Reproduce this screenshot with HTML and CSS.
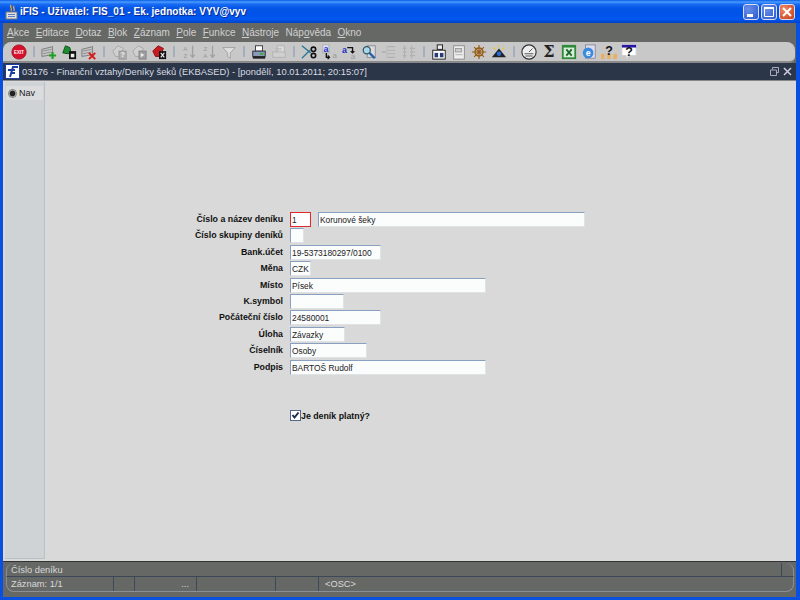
FILE: index.html
```html
<!DOCTYPE html>
<html lang="cs">
<head>
<meta charset="utf-8">
<title>iFIS</title>
<link rel="stylesheet" href="styles.css">
</head>
<body>
<div class="window">
  <header class="titlebar">
    <svg class="app-icon" width="14" height="16" viewBox="0 0 14 16"><rect x="1" y="8" width="11" height="7" fill="#e0e0e0" stroke="#777"/><path d="M3 10.500h7M3 12.500h7" stroke="#5a7fc0"/><path d="M6 1c-2 2 2 3 0 6M9 2c-1.500 2 1 2 0 5" fill="none" stroke="#e8a040" stroke-width="1.400"/></svg>
    <span class="app-title">iFIS - Uživatel: FIS_01 - Ek. jednotka: VYV@vyv</span>
    <div class="win-buttons">
      <span class="win-btn"><svg width="16" height="16" viewBox="0 0 16 16"><rect x="4" y="10" width="6" height="3" fill="#fff"/></svg></span>
      <span class="win-btn"><svg width="16" height="16" viewBox="0 0 16 16"><path d="M3.500 4.500h9v8h-9z" fill="none" stroke="#fff"/><path d="M3 4h10" stroke="#fff" stroke-width="2"/></svg></span>
      <span class="win-btn close"><svg width="16" height="16" viewBox="0 0 16 16"><path d="M4 4l8 8M12 4l-8 8" stroke="#fff" stroke-width="2"/></svg></span>
    </div>
  </header>

  <nav class="menubar">
    <span><u>A</u>kce</span><span><u>E</u>ditace</span><span><u>D</u>otaz</span><span><u>B</u>lok</span><span><u>Z</u>áznam</span><span><u>P</u>ole</span><span><u>F</u>unkce</span><span><u>N</u>ástroje</span><span>Náp<u>o</u>věda</span><span><u>O</u>kno</span>
  </nav>

  <div class="toolbar-wrap">
  <div class="toolbar">
    <span class="tool"><svg viewBox="0 0 18 18"><circle cx="9" cy="9" r="8" fill="#d8102c" stroke="#a01020"/><text x="9" y="11" class="exit-text">EXIT</text></svg></span>
    <i class="sep"></i>
    <span class="tool"><svg viewBox="0 0 18 18"><path d="M1 6l12-3v9L1 14z" fill="#c4c4c4" stroke="#777"/><path d="M2 8l10-2M2 11l10-2" stroke="#8c8c8c"/><path d="M13 9v8M9 13h8" stroke="#20a020" stroke-width="2.400"/></svg></span>
    <span class="tool"><svg viewBox="0 0 18 18"><path d="M2 10l3-8 5 2 1 5-3 2z" fill="#1c8c30" stroke="#0c4c18"/><rect x="9" y="8" width="8" height="9" fill="#111"/><rect x="11" y="11" width="4" height="4" fill="#eee"/></svg></span>
    <span class="tool"><svg viewBox="0 0 18 18"><path d="M1 6l12-3v9L1 14z" fill="#c4c4c4" stroke="#777"/><path d="M2 8l10-2M2 11l10-2" stroke="#8c8c8c"/><path d="M9 10l7 7M16 10l-7 7" stroke="#d81818" stroke-width="2.200"/></svg></span>
    <i class="sep"></i>
    <span class="tool"><svg viewBox="0 0 18 18"><path d="M2 8l6-6 6 3-4 9H5z" fill="#d0d0d0" stroke="#a4a4a4"/><rect x="9" y="8" width="8" height="9" fill="#b0b0b0" stroke="#909090"/><text x="13" y="15" class="mini">?</text></svg></span>
    <span class="tool"><svg viewBox="0 0 18 18"><path d="M2 8l6-6 6 3-4 9H5z" fill="#d0d0d0" stroke="#a4a4a4"/><rect x="9" y="8" width="8" height="9" fill="#a0a0a0" stroke="#808080"/><path d="M11 10l4 2.500-4 2.500z" fill="#eee"/></svg></span>
    <span class="tool"><svg viewBox="0 0 18 18"><path d="M2 8l6-6 6 3-4 9H5z" fill="#c81c20" stroke="#801014"/><rect x="9" y="8" width="8" height="9" fill="#111"/><path d="M11 10l4 5M15 10l-4 5" stroke="#eee" stroke-width="1.300"/></svg></span>
    <i class="sep"></i>
    <span class="tool"><svg viewBox="0 0 18 18"><text x="5" y="8" class="sort">A</text><text x="5" y="16" class="sort">Z</text><path d="M13 2v13M10.500 12l2.500 3 2.500-3" fill="none" stroke="#a0a0a0" stroke-width="1.400"/></svg></span>
    <span class="tool"><svg viewBox="0 0 18 18"><text x="5" y="8" class="sort">Z</text><text x="5" y="16" class="sort">A</text><path d="M13 2v13M10.500 12l2.500 3 2.500-3" fill="none" stroke="#a0a0a0" stroke-width="1.400"/></svg></span>
    <span class="tool"><svg viewBox="0 0 18 18"><path d="M2 4h14l-5.500 6v6l-3-2v-4z" fill="#dedede" stroke="#a0a0a0"/></svg></span>
    <i class="sep"></i>
    <span class="tool"><svg viewBox="0 0 18 18"><rect x="5" y="2" width="8" height="6" fill="#fff" stroke="#333"/><rect x="2" y="8" width="14" height="6" fill="#8a9ab8" stroke="#223"/><rect x="10" y="10" width="4" height="2" fill="#30b030"/><rect x="2" y="14" width="14" height="2.500" fill="#222"/></svg></span>
    <span class="tool"><svg viewBox="0 0 18 18"><rect x="7" y="2" width="8" height="8" fill="#dcdcdc" stroke="#b0b0b0"/><rect x="2" y="9" width="14" height="6" fill="#d0d0d0" stroke="#b0b0b0"/><path d="M5 5h7M5 7h7" stroke="#b8b8b8"/></svg></span>
    <i class="sep"></i>
    <span class="tool"><svg viewBox="0 0 18 18"><path d="M1 2l10 8M1 16l9-9" stroke="#2a7a9a" stroke-width="1.500"/><circle cx="14" cy="6" r="2.500" fill="none" stroke="#111" stroke-width="1.800"/><circle cx="14" cy="13" r="2.500" fill="none" stroke="#111" stroke-width="1.800"/></svg></span>
    <span class="tool"><svg viewBox="0 0 18 18"><rect x="2" y="1" width="7" height="9" fill="#dfe3ff" stroke="#aaa"/><text x="5.500" y="9" class="letter-a">a</text><text x="13" y="16" class="letter-b">a</text><path d="M6 10v5h3M7.500 13l2 2-2 2" fill="none" stroke="#111" stroke-width="1.500"/></svg></span>
    <span class="tool"><svg viewBox="0 0 18 18"><text x="1" y="10" class="letter-a">a</text><text x="11" y="17" class="letter-b">a</text><path d="M7 4h6v6M11 8l2 2 2-2" fill="none" stroke="#111" stroke-width="1.500"/></svg></span>
    <span class="tool"><svg viewBox="0 0 18 18"><rect x="7" y="2" width="9" height="13" fill="#dcdcdc" stroke="#888"/><circle cx="6.500" cy="7" r="4" fill="#a8d8e8" stroke="#356" stroke-width="1.400"/><path d="M9.500 10l6 6" stroke="#2060b0" stroke-width="2.600"/></svg></span>
    <span class="tool"><svg viewBox="0 0 18 18"><path d="M7 3h9M7 7h9M7 11h9M7 15h9" stroke="#b0b0b0" stroke-width="1.300"/><path d="M1 9h5" stroke="#a0a0a0"/><rect x="6" y="2" width="1" height="14" fill="#bbb"/></svg></span>
    <span class="tool"><svg viewBox="0 0 18 18"><path d="M4 2v14M12 2v14M2 5h4M2 9h4M2 13h4M10 5h6M10 9h6M10 13h6" stroke="#b0b0b0" stroke-width="1.300"/></svg></span>
    <i class="sep"></i>
    <span class="tool"><svg viewBox="0 0 18 18"><rect x="2" y="7" width="14" height="10" fill="#fff" stroke="#111"/><rect x="4" y="10" width="4" height="5" fill="#2a3c78"/><rect x="10" y="10" width="4" height="5" fill="#2a3c78"/><rect x="7" y="1" width="6" height="5" fill="#eee" stroke="#111"/></svg></span>
    <span class="tool"><svg viewBox="0 0 18 18"><rect x="3" y="2" width="12" height="15" fill="#eee" stroke="#888"/><rect x="5" y="5" width="7" height="4" fill="#ccc" stroke="#999"/><path d="M5 12h8" stroke="#aaa"/></svg></span>
    <span class="tool"><svg viewBox="0 0 18 18"><circle cx="9" cy="9" r="4.500" fill="none" stroke="#965a12" stroke-width="1.600"/><path d="M9 1v16M1 9h16M3.500 3.500l11 11M14.500 3.500l-11 11" stroke="#965a12" stroke-width="1.300"/></svg></span>
    <span class="tool"><svg viewBox="0 0 18 18"><path d="M1 15L9 5l8 10z" fill="#222"/><path d="M3 4l2 2M9 1v2M15 4l-2 2" stroke="#e8c820" stroke-width="1.400"/><circle cx="9" cy="11" r="2.500" fill="#2a6ae0"/></svg></span>
    <i class="sep"></i>
    <span class="tool"><svg viewBox="0 0 18 18"><circle cx="9" cy="9" r="8" fill="#eee" stroke="#333" stroke-width="1.300"/><path d="M9 9l4-4M4 11h10M5 13.500h8" stroke="#444"/></svg></span>
    <span class="tool"><span class="sigma">Σ</span></span>
    <span class="tool"><svg viewBox="0 0 18 18"><rect x="1" y="1" width="16" height="16" fill="#2e8a3a"/><rect x="3" y="4" width="12" height="11" fill="#d8ecd8"/><path d="M6 6l6 7M12 6l-6 7" stroke="#186828" stroke-width="2"/></svg></span>
    <span class="tool"><svg viewBox="0 0 18 18"><rect x="5" y="1" width="11" height="15" fill="#dde" stroke="#889"/><circle cx="8" cy="10" r="6" fill="#3a8ae0"/><text x="8" y="13" class="ie">e</text></svg></span>
    <span class="tool"><svg viewBox="0 0 18 18"><rect x="0" y="11" width="4" height="6" fill="#e8b060"/><rect x="7" y="11" width="4" height="6" fill="#e8b060"/><rect x="14" y="11" width="4" height="6" fill="#e8b060"/><text x="9" y="12" class="help">?</text></svg></span>
    <span class="tool"><svg viewBox="0 0 18 18"><path d="M1 2h16v11H9l-3 4v-4H1z" fill="#fff" stroke="#ccc"/><rect x="1" y="1" width="16" height="3" fill="#2818a8"/><text x="9" y="14" class="help">?</text></svg></span>
  </div>
  </div>

  <div class="doc-title">
    <svg class="doc-icon" width="15" height="15" viewBox="0 0 15 15"><rect x=".5" y=".5" width="14" height="14" fill="#fff" stroke="#1c3ca0"/><path d="M5 13l3-10h5M3 6h7M6 9h4" fill="none" stroke="#1c3ca0" stroke-width="2"/></svg>
    <span class="doc-text">03176 - Finanční vztahy/Deníky šeků (EKBASED) - [pondělí, 10.01.2011; 20:15:07]</span>
    <svg class="doc-ctl" width="9" height="9" viewBox="0 0 9 9"><path d="M2.500 2.500v-2h6v5h-2M.5 3h6v5.500h-6z" fill="none" stroke="#aab"/></svg>
    <svg class="doc-ctl" width="9" height="9" viewBox="0 0 9 9"><path d="M1 1l7 7M8 1l-7 7" stroke="#ccd" stroke-width="1.500"/></svg>
  </div>

  <main class="doc-body">
    <aside class="nav-pane">
      <div class="nav-item"><span class="radio"></span><span>Nav</span></div>
    </aside>
    <section class="form-area">
      <form class="form-grid">
        <label>Číslo a název deníku</label>
        <div class="pair"><span class="field focus w-21">1</span><span class="field w-267">Korunové šeky</span></div>
        <label>Číslo skupiny deníků</label><div><span class="field w-14"></span></div>
        <label>Bank.účet</label><div><span class="field w-91">19-5373180297/0100</span></div>
        <label>Měna</label><div><span class="field w-21">CZK</span></div>
        <label>Místo</label><div><span class="field w-196">Písek</span></div>
        <label>K.symbol</label><div><span class="field w-54"></span></div>
        <label>Počáteční číslo</label><div><span class="field w-91">24580001</span></div>
        <label>Úloha</label><div><span class="field w-55">Závazky</span></div>
        <label>Číselník</label><div><span class="field w-77">Osoby</span></div>
        <label>Podpis</label><div><span class="field w-196">BARTOŠ Rudolf</span></div>
      </form>
      <div class="check-row">
        <svg class="check" width="11" height="11" viewBox="0 0 11 11"><rect x=".5" y=".5" width="10" height="10" fill="#fff" stroke="#55688c"/><path d="M2.500 5l2 2.500 4-5" fill="none" stroke="#1c2c50" stroke-width="2"/></svg>
        <span>Je deník platný?</span>
      </div>
    </section>
  </main>

  <footer class="status">
    <div class="status-top"><span>Číslo deníku</span><i class="end-cell"></i></div>
    <div class="status-bottom">
      <span class="cell c-rec">Záznam: 1/1</span>
      <span class="cell c-a"></span>
      <span class="cell c-b">...</span>
      <span class="cell c-c"></span>
      <span class="cell c-d"></span>
      <span class="cell c-e">&lt;OSC&gt;</span>
    </div>
  </footer>
</div>
</body>
</html>
```
FILE: styles.css
```css
* { box-sizing: border-box; }
html, body { margin: 0; padding: 0; }
body { width: 800px; height: 600px; overflow: hidden; font-family: "Liberation Sans", Arial, sans-serif; }
.window { width: 800px; height: 600px; display: flex; flex-direction: column; background: #0a50e0; padding: 0 4px 3px 3px; }

.titlebar { height: 23px; margin: 0 -4px 0 -3px; padding: 0 5px; display: flex; align-items: center; color: #fff;
  background: linear-gradient(#0a5ce8 0, #4a9cff 2px, #1a6cf4 4px, #0456e6 8px, #0052e8 14px, #0458f0 19px, #0040c8 23px); }
.app-icon { margin-right: 1px; flex: none; }
.app-title { font: bold 10px "Liberation Sans", sans-serif; letter-spacing: .05px; text-shadow: 1px 1px 0 #0a2a90; }
.win-buttons { margin-left: auto; display: flex; gap: 2px; }
.win-btn { width: 16px; height: 16px; border: 1px solid #dde; border-radius: 3px; background: radial-gradient(circle at 30% 30%, #6a90e8, #2a58d0); display: block; overflow: hidden; }
.win-btn svg { display: block; margin: -1px; }
.win-btn.close { background: radial-gradient(circle at 30% 30%, #ee8a68, #c83c14); }

.menubar { height: 19px; background: #666866; display: flex; align-items: center; padding-left: 4px; gap: 6.400px; color: #d0d0d0; font-size: 10px; }
.menubar u { text-decoration: underline; }

.toolbar-wrap { height: 21px; background: #666866; flex: none; }
.toolbar { height: 100%; margin-right: 1px; background: #c8c8c8; border-radius: 8px 8px 6px 0; border-bottom: 2px solid #8a8a8a; display: flex; align-items: center; padding-left: 6px; }
.tool { width: 20px; height: 19px; display: flex; align-items: center; justify-content: center; flex: none; }
.tool svg { display: block; width: 16px; height: 16px; overflow: hidden; }
.sep { width: 10px; height: 11px; flex: none; background: linear-gradient(#a4aebc, #a4aebc) center / 2px 100% no-repeat; }
.exit-text { font: bold 5px "Liberation Sans", sans-serif; fill: #fff; text-anchor: middle; }
.mini { font: bold 8px "Liberation Sans", sans-serif; fill: #eee; text-anchor: middle; }
.sort { font: 7px "Liberation Sans", sans-serif; fill: #999; text-anchor: middle; }
.letter-a { font: bold 10px "Liberation Sans", sans-serif; fill: #2030c0; text-anchor: middle; }
.letter-a:first-child { text-anchor: start; }
.letter-b { font: 9px "Liberation Sans", sans-serif; fill: #999; }
.ie { font: bold 10px "Liberation Sans", sans-serif; fill: #fff; text-anchor: middle; }
.help { font: bold 14px "Liberation Sans", sans-serif; fill: #111; text-anchor: middle; }
.sigma { font: bold 16px "DejaVu Serif", serif; color: #222; line-height: 18px; }

.doc-title { height: 18px; background: #2b3648; border-bottom: 1px solid #888; display: flex; align-items: center; padding: 0 4px 0 2px; color: #d8dce0; font-size: 9.400px; gap: 2px; }
.doc-icon { flex: none; }
.doc-text { flex: 1; white-space: nowrap; }
.doc-ctl { flex: none; margin-left: 2px; }

.doc-body { flex: 1; min-height: 0; display: flex; background: #d8d9d8; padding: 1px 0 2px 2px; border-bottom: 1px solid #333; }
.nav-pane { width: 40px; flex: none; background: #cfd3d6; border-right: 1px solid #b8c0c8; border-bottom: 1px solid #b8c0c8; padding: 4px 1px; }
.nav-item { display: flex; align-items: center; gap: 2px; font-size: 9px; color: #222; background: #dadcde; height: 14px; padding-left: 2px; }
.radio { width: 9px; height: 9px; border-radius: 50%; background: radial-gradient(circle, #222 0 2.500px, #eee 3.500px); border: 1px solid #777; flex: none; }

.form-area { flex: 1; padding-top: 130px; min-width: 0; }
.form-grid { display: grid; grid-template-columns: 238px 1fr; column-gap: 7px; grid-auto-rows: 16.400px; margin: 0; }
.form-grid label { text-align: right; font: bold 8.800px/14px "Liberation Sans", sans-serif; color: #111; white-space: nowrap; }
.pair { display: flex; gap: 7px; }
.field { display: block; height: 15px; background: #fbfcfc; border: 1px solid #8aa0c0; border-right-color: #dfe3e6; border-bottom-color: #dfe3e6; padding-left: 1px; font: 8.400px/14px "Liberation Sans", sans-serif; color: #222; white-space: nowrap; overflow: hidden; }
.field.focus { border: 1px solid #e02828; background: #fff; }
.w-14 { width: 14px; } .w-21 { width: 21px; } .w-54 { width: 54px; } .w-55 { width: 55px; }
.w-77 { width: 77px; } .w-91 { width: 91px; } .w-196 { width: 196px; } .w-267 { width: 267px; }

.check-row { display: flex; align-items: center; gap: 0; margin: 34px 0 0 245px; font: bold 8.800px/12px "Liberation Sans", sans-serif; color: #111; }
.check { flex: none; }

.status { height: 35px; background: #666866; color: #d8d8d8; font-size: 9.300px; padding: 1px 2px 5px 3px; display: flex; flex-direction: column; }
.status-top, .status-bottom { border: 1px solid #8a9098; }
.status-top { height: 14px; border-width: 0 1px 1px 1px; border-radius: 8px 8px 0 0; display: flex; align-items: center; padding-left: 4px; border-bottom-color: #3c4858; }
.end-cell { margin-left: auto; margin-right: 11px; width: 1px; height: 100%; border-left: 1px solid #3c4858; }
.status-bottom { flex: 1; border-width: 0 1px 1px 1px; border-radius: 0 0 8px 8px; display: flex; align-items: center; padding-left: 4px; }
.cell { height: 100%; display: flex; align-items: center; border-right: 1px solid #3c4858; flex: none; }
.c-rec { width: 103px; } .c-a { width: 21px; } .c-b { width: 62px; justify-content: flex-end; padding-right: 7px; }
.c-c { width: 79px; } .c-d { width: 43px; } .c-e { border: 0; padding-left: 6px; }
```
